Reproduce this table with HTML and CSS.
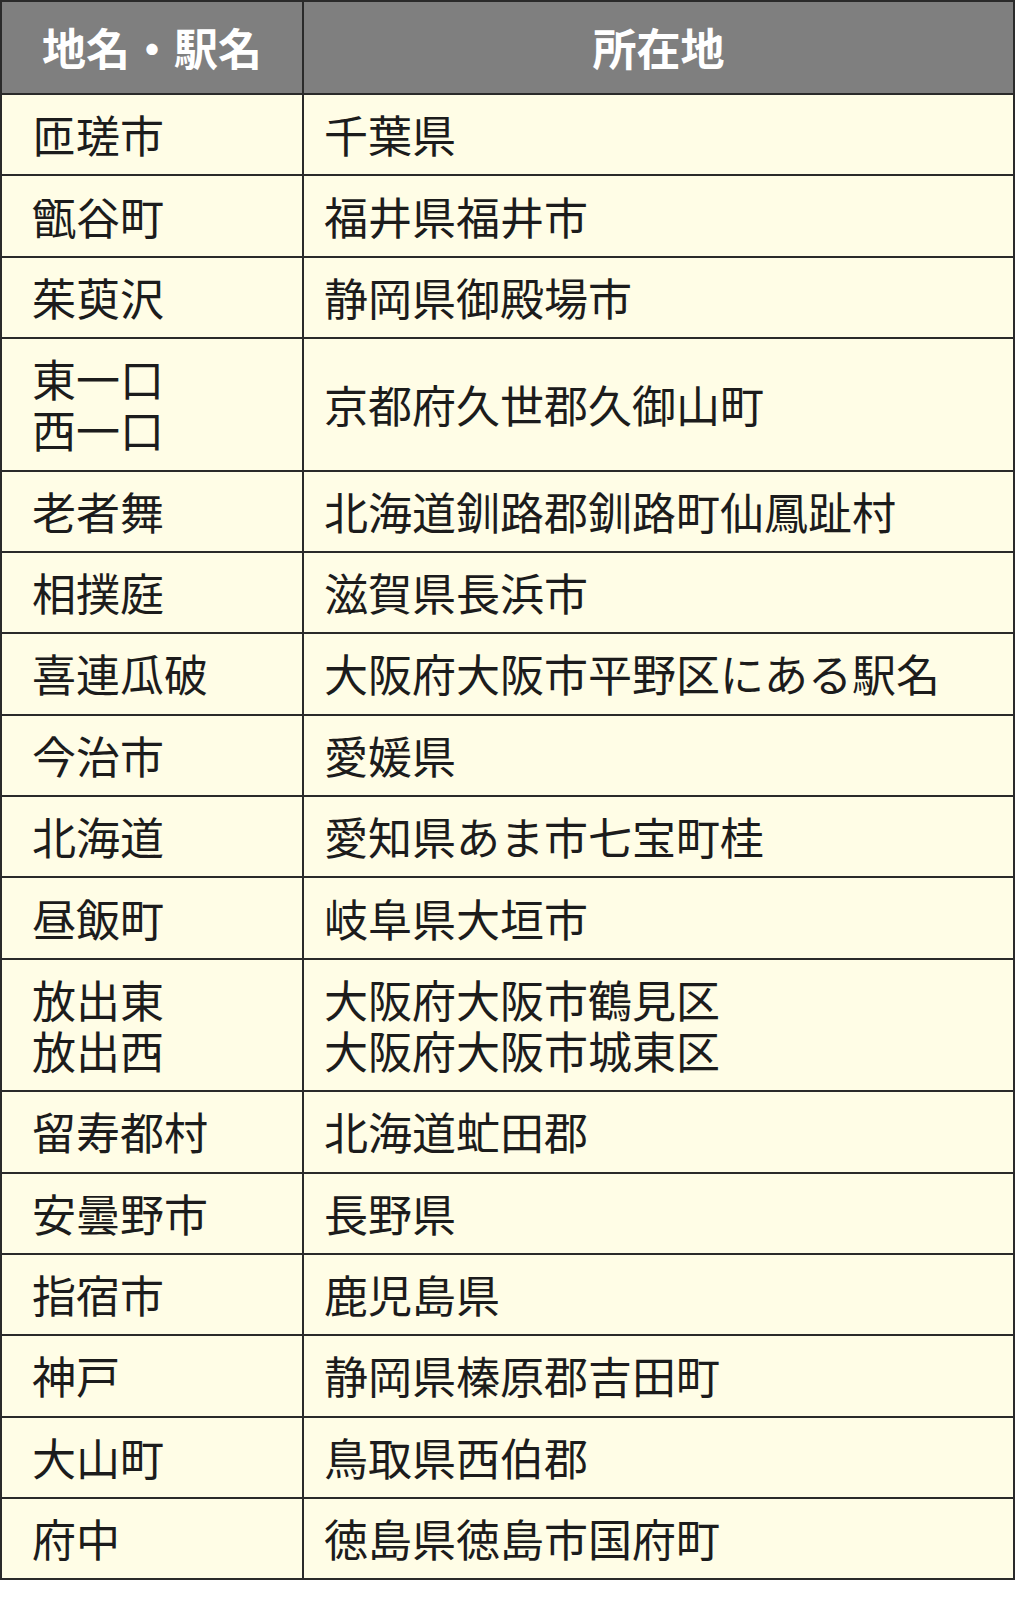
FILE: index.html
```html
<!DOCTYPE html>
<html lang="ja">
<head>
<meta charset="utf-8">
<title>地名・駅名</title>
<link rel="stylesheet" href="styles.css">
</head>
<body>
<table class="places">
  <thead>
    <tr><th class="col-name">地名・駅名</th><th class="col-loc">所在地</th></tr>
  </thead>
  <tbody>
    <tr><td>匝瑳市</td><td>千葉県</td></tr>
    <tr><td>甑谷町</td><td>福井県福井市</td></tr>
    <tr><td>茱萸沢</td><td>静岡県御殿場市</td></tr>
    <tr><td>東一口<br>西一口</td><td>京都府久世郡久御山町</td></tr>
    <tr><td>老者舞</td><td>北海道釧路郡釧路町仙鳳趾村</td></tr>
    <tr><td>相撲庭</td><td>滋賀県長浜市</td></tr>
    <tr><td>喜連瓜破</td><td>大阪府大阪市平野区にある駅名</td></tr>
    <tr><td>今治市</td><td>愛媛県</td></tr>
    <tr><td>北海道</td><td>愛知県あま市七宝町桂</td></tr>
    <tr><td>昼飯町</td><td>岐阜県大垣市</td></tr>
    <tr><td>放出東<br>放出西</td><td>大阪府大阪市鶴見区<br>大阪府大阪市城東区</td></tr>
    <tr><td>留寿都村</td><td>北海道虻田郡</td></tr>
    <tr><td>安曇野市</td><td>長野県</td></tr>
    <tr><td>指宿市</td><td>鹿児島県</td></tr>
    <tr><td>神戸</td><td>静岡県榛原郡吉田町</td></tr>
    <tr><td>大山町</td><td>鳥取県西伯郡</td></tr>
    <tr><td>府中</td><td>徳島県徳島市国府町</td></tr>
  </tbody>
</table>
</body>
</html>
```

FILE: styles.css
```css
html, body {
  margin: 0;
  padding: 0;
  background: #ffffff;
}

.places {
  border-collapse: separate;
  border-spacing: 0;
  border-top: 2px solid #2a2a2a;
  border-left: 2px solid #2a2a2a;
  font-family: "Noto Sans CJK JP", "Noto Sans", sans-serif;
  color: #1c1c1c;
  font-size: 44px;
  line-height: 51px;
  width: 1015px;
  table-layout: fixed;
}

.places th,
.places td {
  border-right: 2px solid #2a2a2a;
  border-bottom: 2px solid #2a2a2a;
  vertical-align: middle;
  white-space: nowrap;
}

.places th {
  background: #7f7f7f;
  color: #ffffff;
  font-weight: 700;
  height: 93px;
  padding: 0;
  text-align: center;
  box-sizing: border-box;
}

.col-name {
  width: 302px;
}

.places td {
  background: #fffde6;
  padding: 14.2px 10px 14.2px 20px;
  text-align: left;
}

.places td:first-child {
  padding-left: 30px;
}
```
